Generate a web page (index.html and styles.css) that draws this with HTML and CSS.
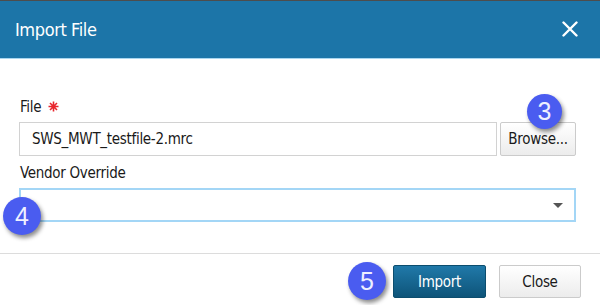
FILE: index.html
```html
<!doctype html>
<html>
  <head>
    <meta charset="utf-8" />
    <title>Import File</title>
    <link rel="stylesheet" href="styles.css">
  </head>
  <body>
    <div class="dialog">
        <div class="dialog-header">
            <span class="dialog-title">Import File</span>
            <svg class="close-icon" width="16" height="16" viewBox="0 0 16 16">
                <path d="M1.5 1.5 L14.5 14.5 M14.5 1.5 L1.5 14.5" stroke="#fff" stroke-width="2.4" stroke-linecap="round" />
            </svg>
        </div>

        <div class="dialog-body">
            <label class="field-label">File
                <svg class="required" width="11" height="11" viewBox="0 0 11 11">
                    <path d="M5.5 0.5 V10.5 M0.5 5.5 H10.5 M2 2 L9 9 M9 2 L2 9" stroke="#e8262d" stroke-width="1.6" />
                </svg>
            </label>
            <div class="file-row">
                <div class="text-input">SWS_MWT_testfile-2.mrc</div>
                <button class="btn btn-light browse">Browse...</button>
            </div>

            <label class="field-label vendor">Vendor Override</label>
            <div class="select-input">
                <span class="caret"></span>
            </div>
        </div>

        <div class="dialog-footer">
            <button class="btn btn-primary import">Import</button>
            <button class="btn btn-light close">Close</button>
        </div>

        <span class="step step-3">3</span>
        <span class="step step-4">4</span>
        <span class="step step-5">5</span>
    </div>
  </body>
</html>
```

FILE: styles.css
```css
body {
    margin: 0;
    background: #fff;
    font-family: "DejaVu Sans Condensed", "Liberation Sans", Arial, sans-serif;
    color: #1a1a1a;
}
.dialog {
    position: relative;
    width: 600px;
    height: 305px;
    border-top: 1px solid #4d4d4d;
    box-sizing: border-box;
    overflow: hidden;
}
.dialog-header {
    height: 57px;
    background: #1c75a8;
    border-bottom: 1px solid #a9d6ef;
    display: flex;
    align-items: center;
    justify-content: space-between;
    padding: 0 22px 0 15px;
}
.dialog-title {
    color: #fff;
    font-size: 18px;
    letter-spacing: -0.4px;
    margin-top: -1px;
}
.close-icon {
    margin-top: -2px;
}
.dialog-body {
    padding: 38px 24px 0 19px;
    font-size: 15px;
    letter-spacing: -0.3px;
}
.field-label {
    display: flex;
    align-items: center;
    gap: 7px;
    line-height: 20px;
    margin: 0 0 5px 1px;
}
.field-label.vendor {
    margin-top: 7px;
}
.required {
    margin-top: -1px;
}
.file-row {
    display: flex;
    gap: 3px;
}
.text-input {
    flex: 1;
    height: 34px;
    box-sizing: border-box;
    border: 1px solid #d2d2d2;
    padding: 0 12px;
    display: flex;
    align-items: center;
    font-size: 15px;
}
.select-input {
    height: 34px;
    box-sizing: border-box;
    border: 2px solid #a3d6f6;
    display: flex;
    align-items: center;
    justify-content: flex-end;
    padding-right: 11px;
}
.caret {
    width: 0;
    height: 0;
    border-left: 5px solid transparent;
    border-right: 5px solid transparent;
    border-top: 5px solid #555;
}
.btn {
    font-family: "DejaVu Sans Condensed", "Liberation Sans", Arial, sans-serif;
    font-size: 15px;
    letter-spacing: -0.3px;
    height: 34px;
    box-sizing: border-box;
    border-radius: 2px;
    padding: 0;
    cursor: pointer;
}
.btn-light {
    background: linear-gradient(#ffffff, #ececec);
    border: 1px solid #cbcbcb;
    color: #1a1a1a;
}
.btn-primary {
    background: linear-gradient(#2079a9, #0e5479);
    border: 1px solid #0c4d6e;
    color: #fff;
}
.browse {
    width: 76px;
}
.dialog-footer {
    margin-top: 31px;
    border-top: 1px solid #dcdcdc;
    display: flex;
    justify-content: flex-end;
    gap: 13px;
    padding: 11px 19px 0 0;
}
.import {
    width: 93px;
    height: 33px;
}
.close {
    width: 82px;
    height: 33px;
}
.step {
    position: absolute;
    border-radius: 50%;
    background: #4a5cf0;
    color: #eef0ff;
    font-family: "Liberation Sans", Arial, sans-serif;
    font-size: 25px;
    display: flex;
    align-items: center;
    justify-content: center;
    box-shadow: 2px 3px 4px rgba(0,0,0,0.45);
}
.step-3 {
    left: 527px;
    top: 93px;
    width: 35px;
    height: 35px;
}
.step-4 {
    left: 3px;
    top: 196px;
    width: 38px;
    height: 38px;
}
.step-5 {
    left: 348px;
    top: 261px;
    width: 38px;
    height: 38px;
}
```
